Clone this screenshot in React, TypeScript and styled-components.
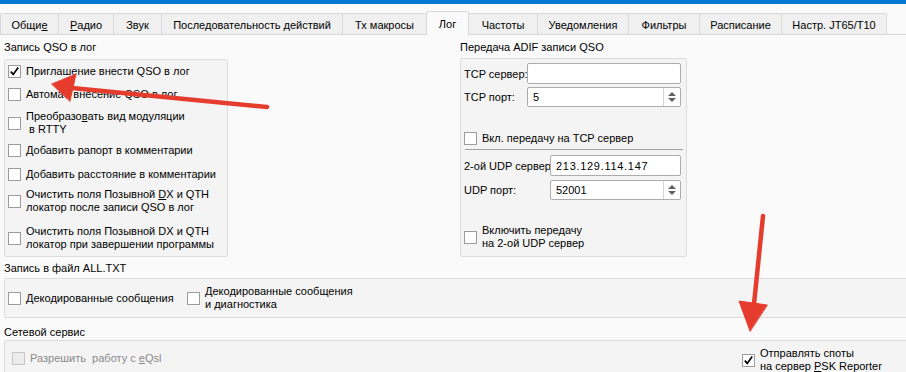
import React, { FC, ReactNode } from "react";
import styled, { createGlobalStyle, css } from "styled-components";

const GlobalStyle = createGlobalStyle`
  html, body {
    margin: 0;
    padding: 0;
    background: #fafafa;
  }
  body {
    font-family: "Liberation Sans", Arial, sans-serif;
    font-size: 11px;
    color: #000;
  }
`;

const Window = styled.div`
  position: relative;
  width: 906px;
  height: 372px;
  overflow: hidden;
  background: #fafafa;
`;

const TopBar = styled.div`
  height: 4px;
  background: #0078d7;
`;

const TabStrip = styled.div`
  display: flex;
  align-items: flex-end;
  height: 30px;
  border-bottom: 1px solid #d9d9d9;
`;

const Tab = styled.div<{ $w: number; $active?: boolean }>`
  box-sizing: border-box;
  width: ${(p) => p.$w}px;
  height: 21px;
  margin-left: -1px;
  padding-top: 1px;
  display: flex;
  align-items: center;
  justify-content: center;
  border: 1px solid #d9d9d9;
  border-bottom: none;
  border-radius: 2px 2px 0 0;
  background: #f0f0f0;
  white-space: nowrap;

  &:first-child {
    margin-left: 0;
  }

  ${(p) =>
    p.$active &&
    css`
      position: relative;
      z-index: 1;
      height: 24px;
      margin-bottom: -1px;
      padding-bottom: 1px;
      background: #fafafa;
    `}
`;

const Pane = styled.div`
  padding-left: 4px;
`;

const TopRow = styled.div`
  display: grid;
  grid-template-columns: 224px 227px;
  column-gap: 232px;
`;

const GroupTitle = styled.div<{ $pt: number; $h: number }>`
  box-sizing: border-box;
  height: ${(p) => p.$h}px;
  padding-top: ${(p) => p.$pt}px;
  line-height: 16px;
  white-space: nowrap;
`;

const GroupBox = styled.div<{ $h?: number; $bleed?: boolean }>`
  box-sizing: border-box;
  ${(p) => p.$h && `height: ${p.$h}px;`}
  border: 1px solid #dcdcdc;
  border-radius: 2px;
  background: #f4f4f4;
  ${(p) => p.$bleed && `margin-right: -3px;`}
`;

const Stack = styled.div<{ $pl: number }>`
  display: flex;
  flex-direction: column;
  padding-left: ${(p) => p.$pl}px;
`;

const Row = styled.label<{ $mt?: number; $disabled?: boolean }>`
  display: flex;
  align-items: center;
  gap: 5px;
  margin-top: ${(p) => p.$mt ?? 0}px;
  line-height: 13px;
  min-height: 14px;
  white-space: pre;
  color: ${(p) => (p.$disabled ? "#8a8a8a" : "#000")};
`;

const Box = styled.span<{ $disabled?: boolean }>`
  box-sizing: border-box;
  flex: none;
  width: 13px;
  height: 13px;
  display: inline-flex;
  align-items: center;
  justify-content: center;
  border: 1px solid ${(p) => (p.$disabled ? "#c6c6c6" : "#9c9c9c")};
  background: ${(p) => (p.$disabled ? "#ececec" : "#fff")};
`;

const FieldRow = styled.div<{ $label: number; $mt: number; $h: number }>`
  display: grid;
  grid-template-columns: ${(p) => p.$label}px ${(p) => 154 + 63 - p.$label}px;
  align-items: center;
  margin-top: ${(p) => p.$mt}px;
  height: ${(p) => p.$h}px;
  white-space: nowrap;
`;

const Input = styled.div<{ $spaced?: boolean }>`
  box-sizing: border-box;
  display: flex;
  align-items: stretch;
  height: 100%;
  border: 1px solid #acacac;
  border-radius: 2px;
  background: #fff;
  letter-spacing: ${(p) => (p.$spaced ? "0.7px" : "0")};
`;

const InputText = styled.span`
  flex: 1;
  display: flex;
  align-items: center;
  padding-left: 5px;
`;

const SpinButtons = styled.span`
  width: 16px;
  border-left: 1px solid #d5d5d5;
  display: flex;
  flex-direction: column;
  align-items: center;
  justify-content: center;
  gap: 2px;
`;

const Arrow = styled.span<{ $down?: boolean }>`
  width: 0;
  height: 0;
  border-left: 4px solid transparent;
  border-right: 4px solid transparent;
  ${(p) =>
    p.$down
      ? "border-top: 4px solid #606060;"
      : "border-bottom: 4px solid #606060;"}
`;

const Separator = styled.div`
  height: 1px;
  margin: 4px 3px 0 1px;
  background: #a0a0a0;
`;

const FileRow = styled.div`
  display: grid;
  grid-template-columns: 179px auto;
  align-items: center;
  height: 38px;
  padding-left: 3px;
`;

const NetRow = styled.div`
  display: grid;
  grid-template-columns: 730px auto;
  align-items: start;
  height: 40px;
  padding: 6px 0 0 7px;
`;

const Overlay = styled.svg`
  position: absolute;
  left: 0;
  top: 0;
  pointer-events: none;
`;

const Check: FC<{ checked?: boolean; disabled?: boolean }> = ({
  checked,
  disabled,
}) => (
  <Box $disabled={disabled}>
    {checked && (
      <svg width="11" height="11" viewBox="0 0 11 11">
        <path
          d="M1.8 5.6 L4.2 8.4 L9.2 1.6"
          fill="none"
          stroke="#000"
          strokeWidth="1.7"
        />
      </svg>
    )}
  </Box>
);

const CheckRow: FC<{
  mt?: number;
  checked?: boolean;
  disabled?: boolean;
  children: ReactNode;
}> = ({ mt, checked, disabled, children }) => (
  <Row $mt={mt} $disabled={disabled}>
    <Check checked={checked} disabled={disabled} />
    <span>{children}</span>
  </Row>
);

const Spin: FC<{ value: string }> = ({ value }) => (
  <Input>
    <InputText>{value}</InputText>
    <SpinButtons>
      <Arrow />
      <Arrow $down />
    </SpinButtons>
  </Input>
);

const tabs = [
  { w: 59, t: <>Общи<u>е</u></> },
  { w: 56, t: <><u>Р</u>адио</> },
  { w: 49, t: "Звук" },
  { w: 182, t: "Последовательность действий" },
  { w: 85, t: "Тх макросы" },
  { w: 43, t: "Лог", active: true },
  { w: 70, t: "Частоты" },
  { w: 92, t: "Уведомления" },
  { w: 72, t: "Фильтры" },
  { w: 83, t: "Расписание" },
  { w: 106, t: "Настр. JT65/T10" },
];

export default function App() {
  return (
    <>
      <GlobalStyle />
      <Window>
        <TopBar />
        <TabStrip>
          {tabs.map((tab, i) => (
            <Tab key={i} $w={tab.w} $active={tab.active}>
              {tab.t}
            </Tab>
          ))}
        </TabStrip>

        <Pane>
          <TopRow>
            <div>
              <GroupTitle $pt={4} $h={24}>
                Запись QSO в лог
              </GroupTitle>
              <GroupBox $h={198}>
                <Stack $pl={3}>
                  <CheckRow mt={4} checked>
                    Приглашение внести QSO в лог
                  </CheckRow>
                  <CheckRow mt={9}>Автомат. внесение QSO в лог</CheckRow>
                  <CheckRow mt={9}>
                    Преобразо<u>в</u>ать вид модуляции{"\n"} в RTTY
                  </CheckRow>
                  <CheckRow mt={7}>Добавить рапорт в комментарии</CheckRow>
                  <CheckRow mt={10}>Добавить расстояние в комментарии</CheckRow>
                  <CheckRow mt={7}>
                    Очистить поля Позывной <u>D</u>X и QTH{"\n"}локатор после
                    записи QSO в лог
                  </CheckRow>
                  <CheckRow mt={11}>
                    Очистить поля Позывной DX и QTH{"\n"}локатор при завершении
                    программы
                  </CheckRow>
                </Stack>
              </GroupBox>
            </div>

            <div>
              <GroupTitle $pt={4} $h={23}>
                Передача ADIF записи QSO
              </GroupTitle>
              <GroupBox $h={199}>
                <Stack $pl={3}>
                  <FieldRow $label={63} $mt={4} $h={21}>
                    <span>TCP сервер:</span>
                    <Input>
                      <InputText />
                    </Input>
                  </FieldRow>
                  <FieldRow $label={63} $mt={3} $h={20}>
                    <span>TCP порт:</span>
                    <Spin value="5" />
                  </FieldRow>
                  <CheckRow mt={24}>Вкл. передачу на TCP сервер</CheckRow>
                  <Separator />
                  <FieldRow $label={86} $mt={5} $h={21}>
                    <span>2-ой UDP сервер</span>
                    <Input $spaced>
                      <InputText>213.129.114.147</InputText>
                    </Input>
                  </FieldRow>
                  <FieldRow $label={86} $mt={4} $h={20}>
                    <span>UDP порт:</span>
                    <Spin value="52001" />
                  </FieldRow>
                  <CheckRow mt={24}>
                    Включить передачу{"\n"}на 2-ой UDP сервер
                  </CheckRow>
                </Stack>
              </GroupBox>
            </div>
          </TopRow>

          <GroupTitle $pt={3} $h={21}>
            Запись в файл ALL.TXT
          </GroupTitle>
          <GroupBox $bleed>
            <FileRow>
              <CheckRow>Декодированные сообщения</CheckRow>
              <CheckRow>
                Декодированные сообщения{"\n"}и диагностика
              </CheckRow>
            </FileRow>
          </GroupBox>

          <GroupTitle $pt={6} $h={22}>
            Сетевой сервис
          </GroupTitle>
          <GroupBox $bleed>
            <NetRow>
              <CheckRow mt={4} disabled>
                Разрешить  работу с <u>e</u>Qsl
              </CheckRow>
              <CheckRow checked>
                Отправлять споты{"\n"}на сервер <u>P</u>SK Reporter
              </CheckRow>
            </NetRow>
          </GroupBox>
        </Pane>

        <Overlay width="906" height="372" viewBox="0 0 906 372">
          <g fill="#e63c2e" stroke="#e63c2e" strokeLinecap="round">
            <line x1="267" y1="107" x2="72" y2="88" strokeWidth="4.5" />
            <polygon points="52,84 76,74 70,101" strokeWidth="1" />
            <line x1="763" y1="216" x2="754" y2="304" strokeWidth="4.5" />
            <polygon points="750,331 739,301 767,305" strokeWidth="1" />
          </g>
        </Overlay>
      </Window>
    </>
  );
}
